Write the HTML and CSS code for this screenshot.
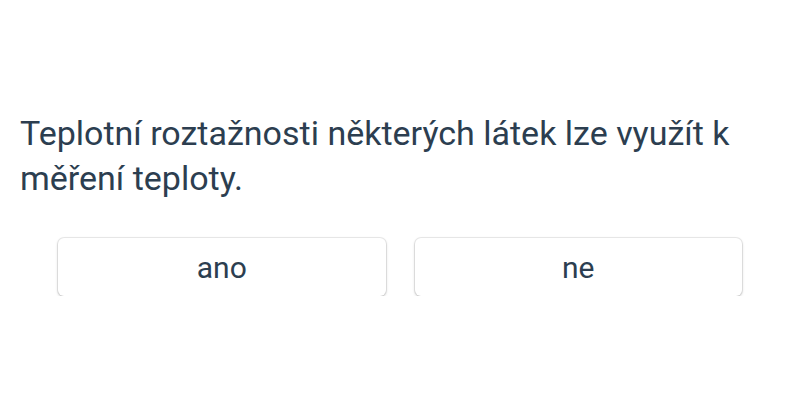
FILE: index.html
```html
<!DOCTYPE html>
<html lang="cs">
<head>
<meta charset="UTF-8" />
<meta name="viewport" content="width=device-width, initial-scale=1.0">
<title>Otázka</title>
<link rel="stylesheet" href="styles.css">
</head>
<body>

  <div class="question">
    <p class="question-text">Teplotní roztažnosti některých látek lze využít k měření teploty.</p>

    <div class="answers">
      <button class="answer-btn">ano</button>
      <button class="answer-btn">ne</button>
    </div>
  </div>

</body>
</html>
```

FILE: styles.css
```css
body {
  margin: 0;
  background-color: #ffffff;
  color: #2c3e50;
  font-family: Roboto, "Noto Sans", Arial, sans-serif;
}

.question {
  padding: 111px 20px 0 20px;
}

.question-text {
  margin: 0;
  font-size: 34px;
  line-height: 45px;
}

.answers {
  width: 90%;
  margin: 37px auto 0 auto;
  display: grid;
  grid-template-columns: 1fr 1fr;
  gap: 29px;
}

.answer-btn {
  height: 58px;
  background-color: #ffffff;
  border: none;
  border-radius: 6px;
  box-shadow: 0 0 0 1px rgba(0, 0, 0, 0.07), 0 1px 3px rgba(0, 0, 0, 0.22);
  color: #2c3e50;
  font-family: Roboto, "Noto Sans", Arial, sans-serif;
  font-size: 30px;
  cursor: pointer;
}
```
